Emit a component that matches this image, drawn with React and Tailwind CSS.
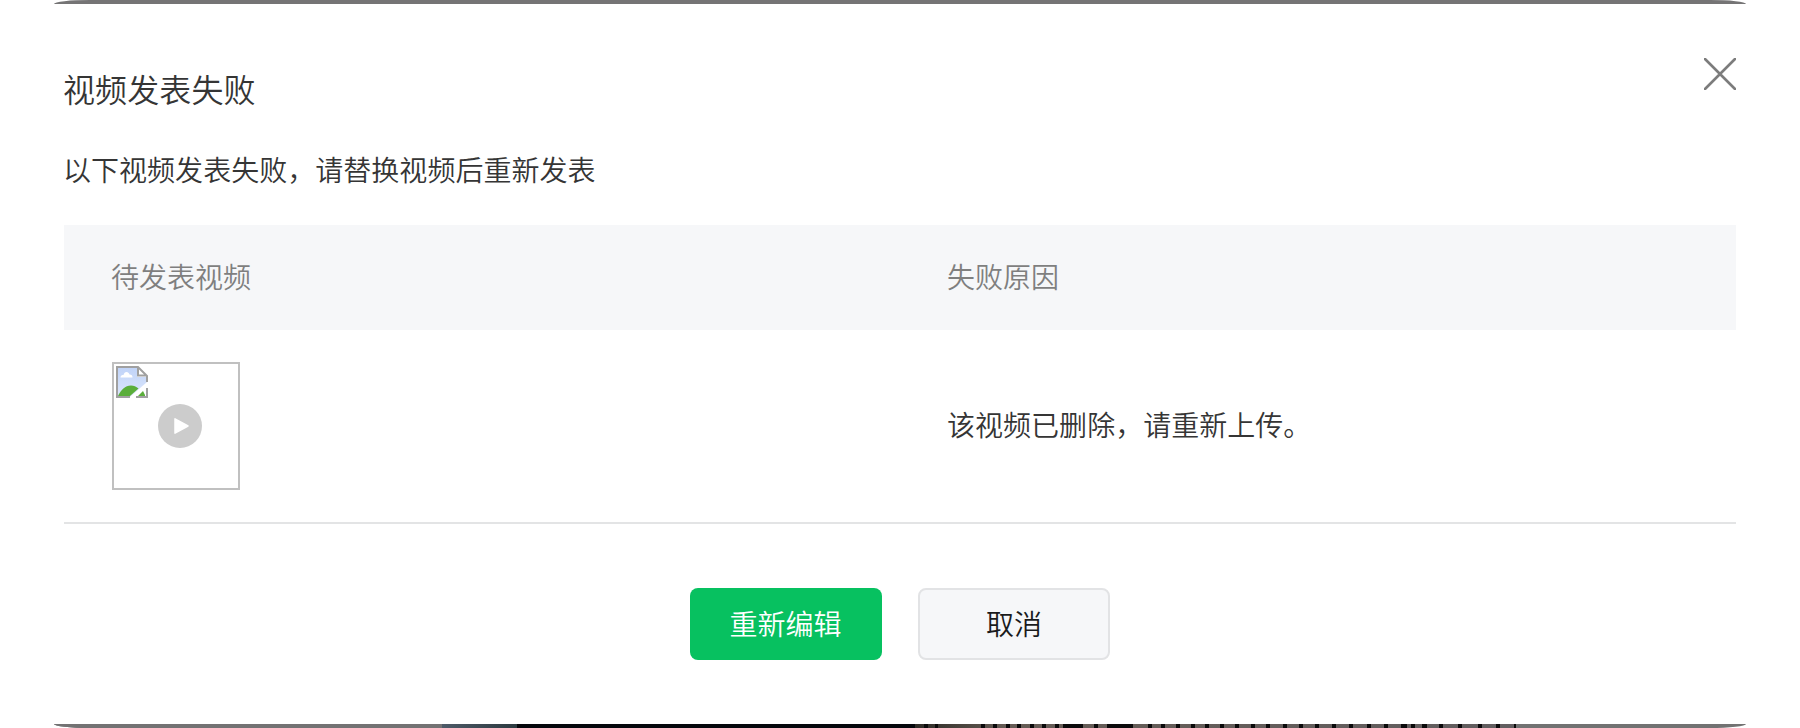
import React from 'react';

const failedVideos = [{ id: 1, reason: '该视频已删除，请重新上传。' }];

// dark slats behind the dialog: [x, width] from the start of the fence
const slats = [
  [9, 4], [20, 3], [66, 4], [78, 4], [91, 4], [102, 4], [115, 4], [127, 4], [140, 4], [148, 20], [179, 4], [192, 26],
  [233, 4], [246, 4], [261, 4], [276, 4], [290, 4], [305, 4], [320, 4], [336, 4], [351, 4], [368, 4], [384, 4], [400, 4],
  [417, 4], [434, 4], [452, 4], [469, 4], [486, 6], [496, 4], [507, 5], [524, 4], [543, 4], [563, 4], [581, 4], [599, 2],
];

const BrokenImageIcon = () => (
  <svg className="h-8 w-8" viewBox="0 0 32 32" fill="none">
    <defs>
      <linearGradient id="sky" x1="0" y1="0" x2="0" y2="1">
        <stop offset="0" stopColor="#c0d3f8" />
        <stop offset="1" stopColor="#dce7fc" />
      </linearGradient>
    </defs>
    <path d="M1 1H22L31 10V16L14 31H1Z" fill="url(#sky)" />
    <path d="M4.500 11.500c0-2 1.500-2.500 3-2.500.5-2 1.500-3 3-3s2.500 1 3 2.500c2 0 3 1 3 3Z" fill="#fff" />
    <path d="M2 30C5 24 9 19.500 15 19.500c3 0 5 1 7.500 3L14 30Z" fill="#5aae3a" />
    <path d="M22 30l5-5 2 4V30Z" fill="#5aae3a" />
    <path d="M21 1H23L32 10V11H21Z" fill="#fff" />
    <path d="M14 31H1V1H22L31 10V16M20 31H31V22M22 1V9.500H31" stroke="#a0a0a0" strokeWidth="2" />
  </svg>
);

const VideoThumb = () => (
  <div className="relative h-32 w-32 border-2 border-[#c0c0c0] p-0.5">
    <BrokenImageIcon />
    <div className="absolute inset-0 flex items-center justify-center pl-2">
      <svg className="h-11 w-11" viewBox="0 0 44 44">
        <circle cx="22" cy="22" r="22" fill="#ccc" />
        <path d="M17 14.800L30 22L17 29.200Z" fill="#fff" stroke="#fff" strokeWidth="1.500" strokeLinejoin="round" />
      </svg>
    </div>
  </div>
);

const App = () => {
  return (
    <div className="flex h-[728px] w-[1800px] flex-col overflow-hidden bg-white font-['Noto_Sans_CJK_SC',sans-serif] text-[28px] leading-10 font-[350] tracking-[0.03px] text-[#353535]">
      <div className="mx-[54px] h-1 shrink-0 rounded-[36px_36px_0_0/4px_4px_0_0] bg-[#757475]" />

      <div className="flex h-[720px] flex-col px-16">
        {/* Header */}
        <div className="flex h-[137px] justify-between">
          <h3 className="mt-[60px] -ml-px text-[32px] leading-[48px] font-[350] tracking-[0.1px]">视频发表失败</h3>
          <button className="mt-[54px] h-8 w-8" aria-label="关闭">
            <svg className="h-8 w-8" viewBox="0 0 32 32">
              <path d="M1 1L31 31M31 1L1 31" stroke="#7c7c7c" strokeWidth="2.600" strokeLinecap="round" />
            </svg>
          </button>
        </div>
        <p className="-ml-px h-[84px] pt-2">以下视频发表失败，请替换视频后重新发表</p>

        {/* Table */}
        <div className="grid h-[105px] grid-cols-2 items-center bg-[#f6f7f9] pb-[3px] text-[#7f7f7f]">
          <div className="pl-[47px]">待发表视频</div>
          <div className="pl-[47px]">失败原因</div>
        </div>
        {failedVideos.map((video) => (
          <div key={video.id} className="grid h-[194px] grid-cols-2 items-center border-b-2 border-[#e3e4e5]">
            <div className="pl-12">
              <VideoThumb />
            </div>
            <div className="pb-1 pl-[47px]">{video.reason}</div>
          </div>
        ))}

        {/* Actions */}
        <div className="mt-16 flex justify-center gap-9">
          <button className="h-[72px] w-48 rounded-lg bg-[#07c160] pr-px pb-0.5 text-white">重新编辑</button>
          <button className="h-[72px] w-48 rounded-lg border-2 border-[#e2e3e5] bg-[#f6f7f9] pb-0.5 text-[#1a1b1c]">取消</button>
        </div>
      </div>

      {/* Page behind the dialog */}
      <div className="mx-[54px] flex h-1 shrink-0 overflow-hidden rounded-[0_0_36px_36px/0_0_4px_4px] bg-[#727272]">
        <div className="w-[388px] bg-[#737273]" />
        <div className="w-[75px] bg-linear-to-r from-[#4e5a68] to-[#2c3a40]" />
        <div className="w-[398px] bg-[#05070c]" />
        <div className="relative w-[601px] bg-linear-to-r from-[#2e2b26] via-[#665c55] via-15% to-[#625e60]">
          {slats.map(([x, width]) => (
            <span key={x} className="absolute h-1 bg-[#0b0a0b]" style={{ left: x, width }} />
          ))}
        </div>
      </div>
    </div>
  );
};

export default App;
